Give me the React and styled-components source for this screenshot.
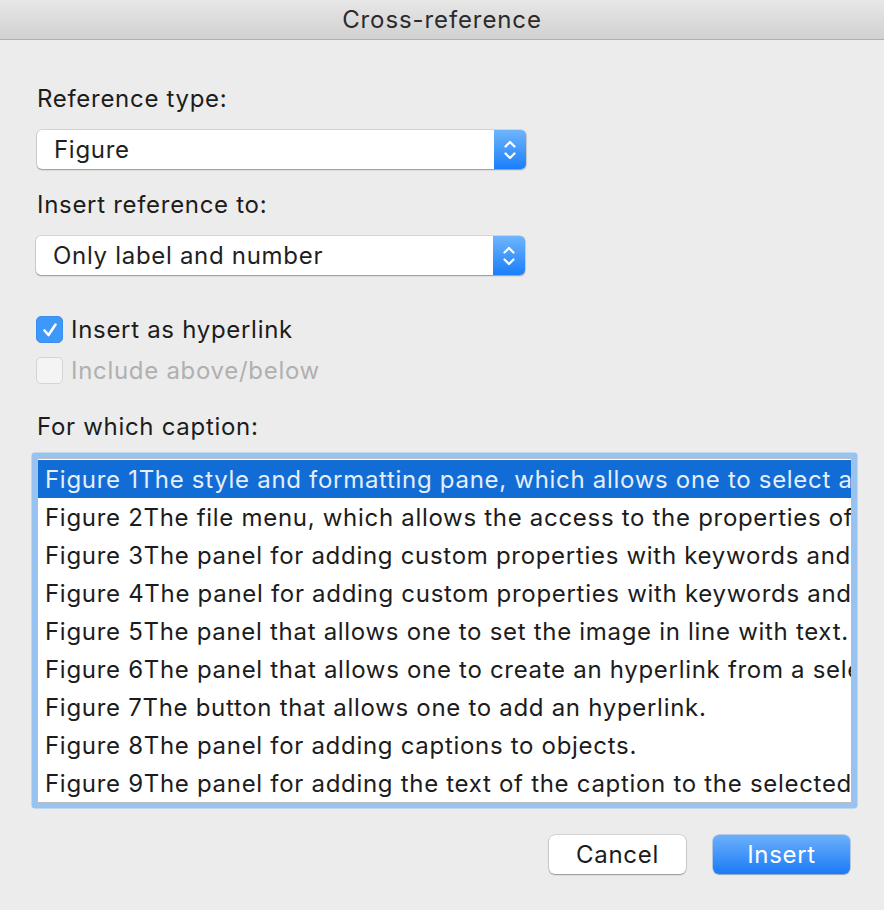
import React from 'react'
import styled, {createGlobalStyle} from 'styled-components'

const captions = [
    'Figure 1The style and formatting pane, which allows one to select a style for the text',
    'Figure 2The file menu, which allows the access to the properties of the document',
    'Figure 3The panel for adding custom properties with keywords and values',
    'Figure 4The panel for adding custom properties with keywords and values filled',
    'Figure 5The panel that allows one to set the image in line with text.',
    'Figure 6The panel that allows one to create an hyperlink from a selection',
    'Figure 7The button that allows one to add an hyperlink.',
    'Figure 8The panel for adding captions to objects.',
    'Figure 9The panel for adding the text of the caption to the selected object',
]

const Global = createGlobalStyle`
    html, body {
        margin: 0;
        background: #ececec;
        font-family: Inter, 'Noto Sans', sans-serif;
        color: #1f1f1f;
    }
`

function Chevrons() {
    return (
        <svg width="14" height="24" viewBox="0 0 14 24" fill="none" stroke="white" strokeWidth="2.2" strokeLinecap="round" strokeLinejoin="round">
            <polyline points="2.5,8.5 7,4 11.5,8.5"/>
            <polyline points="2.5,15.5 7,20 11.5,15.5"/>
        </svg>
    )
}

function Check() {
    return (
        <svg width="18" height="18" viewBox="0 0 18 18" fill="none" stroke="white" strokeWidth="2.6" strokeLinecap="round" strokeLinejoin="round">
            <polyline points="3.5,9.5 7.5,14 14.5,3.5"/>
        </svg>
    )
}

export default function App() {
    return (
        <Window>
            <Global/>
            <TitleBar>Cross-reference</TitleBar>
            <Body>
                <Label top={45}>Reference type:</Label>
                <Select top={17}>
                    <span>Figure</span>
                    <Arrow><Chevrons/></Arrow>
                </Select>
                <Label top={22}>Insert reference to:</Label>
                <Select top={17} shift={-1}>
                    <span>Only label and number</span>
                    <Arrow><Chevrons/></Arrow>
                </Select>
                <CheckRow top={41}>
                    <Box checked><Check/></Box>
                    <span>Insert as hyperlink</span>
                </CheckRow>
                <CheckRow top={14} disabled>
                    <Box/>
                    <span>Include above/below</span>
                </CheckRow>
                <Label top={29}>For which caption:</Label>
                <List>
                    {captions.map((c, i) => (
                        <Row key={i} selected={i === 0}>{c}</Row>
                    ))}
                </List>
                <Buttons>
                    <Button>Cancel</Button>
                    <Button primary>Insert</Button>
                </Buttons>
            </Body>
        </Window>
    )
}

const Window = styled.div`
    width: 884px;
    height: 910px;
    background: #ececec;
    overflow: hidden;
    font-size: 24px;
    letter-spacing: 0.7px;
`
const TitleBar = styled.div`
    height: 39px;
    border-bottom: 1px solid #b1b0b1;
    background: linear-gradient(#e8e7e8, #d2d1d2);
    display: flex;
    align-items: center;
    justify-content: center;
    font-size: 24px;
    color: #2b2b2b;
    letter-spacing: 0.9px;
`
const Body = styled.div`
    display: flex;
    flex-direction: column;
    padding: 0 32px 0 37px;
`
const Label = styled.div`
    margin-top: ${p => p.top}px;
    line-height: 28px;
    color: #1c1c1c;
`
const Select = styled.div`
    margin-top: ${p => p.top}px;
    margin-left: ${p => p.shift || 0}px;
    width: 489px;
    height: 39px;
    box-sizing: border-box;
    background: #fff;
    border-radius: 5px;
    box-shadow: 0 0 0 0.5px rgba(0,0,0,0.18), 0 1px 1.5px rgba(0,0,0,0.3);
    display: flex;
    align-items: center;
    justify-content: space-between;
    overflow: hidden;
    span {
        padding-left: 17px;
    }
`
const Arrow = styled.div`
    width: 32px;
    height: 100%;
    background: linear-gradient(#6fb5fb, #1a7ffb);
    display: flex;
    align-items: center;
    justify-content: center;
`
const CheckRow = styled.div`
    margin-top: ${p => p.top}px;
    display: flex;
    align-items: center;
    gap: 8px;
    height: 27px;
    color: ${p => p.disabled ? '#b0b0b0' : '#1c1c1c'};
    margin-left: -1px;
`
const Box = styled.div`
    width: 27px;
    height: 27px;
    box-sizing: border-box;
    border-radius: 5px;
    display: flex;
    align-items: center;
    justify-content: center;
    background: ${p => p.checked ? '#3d98fa' : '#f4f4f4'};
    border: 1px solid ${p => p.checked ? '#3a8ff0' : '#d4d4d4'};
`
const List = styled.div`
    margin-top: 17px;
    width: 815px;
    height: 345px;
    box-sizing: border-box;
    border: 1px solid #bcbcbc;
    background: #fff;
    box-shadow: 0 0 0 5.5px #98c2f0;
    border-radius: 1px;
    overflow: hidden;
    padding-top: 1px;
`
const Row = styled.div`
    height: 38px;
    line-height: 40px;
    padding-left: 7px;
    white-space: nowrap;
    overflow: hidden;
    background: ${p => p.selected ? '#116cd6' : 'transparent'};
    color: ${p => p.selected ? '#e6eefa' : '#1c1c1c'};
`
const Buttons = styled.div`
    margin-top: 32px;
    display: flex;
    justify-content: flex-end;
    gap: 27px;
    padding-right: 2px;
`
const Button = styled.div`
    width: 137px;
    height: 39px;
    box-sizing: border-box;
    border-radius: 6px;
    display: flex;
    align-items: center;
    justify-content: center;
    color: ${p => p.primary ? '#fff' : '#1c1c1c'};
    background: ${p => p.primary ? 'linear-gradient(#6cb0fa, #1a7bf8)' : '#fff'};
    box-shadow: ${p => p.primary
        ? '0 0 0 0.5px rgba(20,100,220,0.5), 0 1px 1px rgba(0,0,0,0.2)'
        : '0 0 0 0.5px rgba(0,0,0,0.2), 0 1px 1.5px rgba(0,0,0,0.3)'};
`
